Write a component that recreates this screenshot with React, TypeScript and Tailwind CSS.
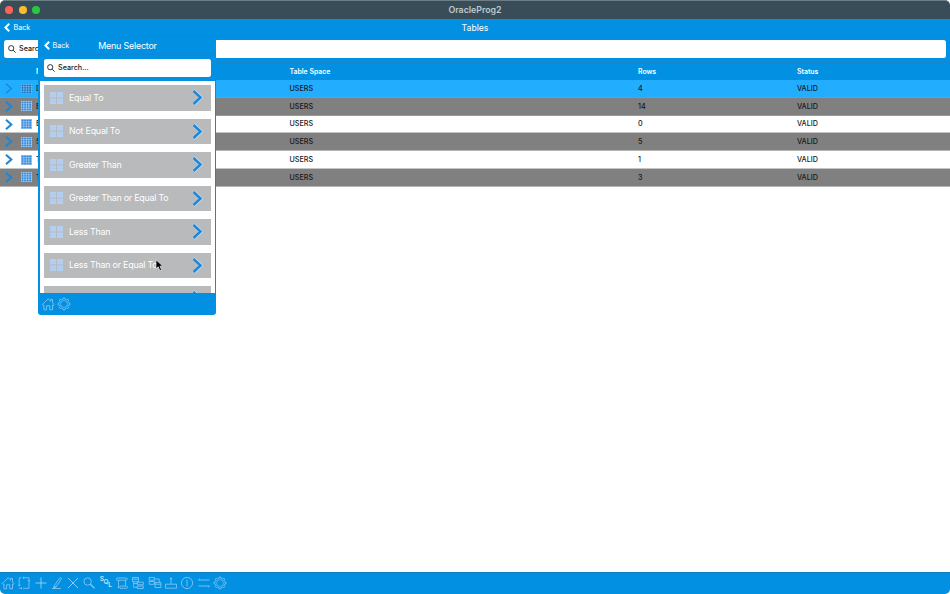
import React from "react";

type Row = { name: string; rows: string; bg: string };

const rows: Row[] = [
  { name: "D", rows: "4", bg: "bg-[#22adff] border-[#4aa9e4]" },
  { name: "E", rows: "14", bg: "bg-[#808080] border-[#9a9a9a]" },
  { name: "E", rows: "0", bg: "bg-white border-[#c4c4c4]" },
  { name: "S", rows: "5", bg: "bg-[#808080] border-[#b4b4b4]" },
  { name: "T", rows: "1", bg: "bg-white border-[#c4c4c4]" },
  { name: "T", rows: "3", bg: "bg-[#808080] border-[#b4b4b4]" },
];

const options = [
  "Equal To",
  "Not Equal To",
  "Greater Than",
  "Greater Than or Equal To",
  "Less Than",
  "Less Than or Equal To",
  "",
];

function BackChevron() {
  return (
    <svg className="h-[9px] w-[6px] shrink-0" viewBox="0 0 6 9" fill="none" stroke="white" strokeWidth="2">
      <path d="M5.2.7 1.4 4.5l3.8 3.8" />
    </svg>
  );
}

function SearchField({ className }: { className: string }) {
  return (
    <div className={"flex items-center rounded-[2.5px] bg-white text-[7.2px] font-medium text-[#202020] " + className}>
      <svg className="mr-[3px] h-[8px] w-[8px] shrink-0" viewBox="0 0 8 8" fill="none" stroke="#222" strokeWidth="0.9">
        <circle cx="3.2" cy="3.2" r="2.6" />
        <path d="m5.1 5.1 2.5 2.5" />
      </svg>
      <span className="pt-[1.5px]">Search...</span>
    </div>
  );
}

function RowChevron({ dim }: { dim: boolean }) {
  return (
    <svg className="ml-[5px] h-[11px] w-[8px] shrink-0" viewBox="0 0 8 11" fill="none">
      <path d="M1 .8 6.3 5.5 1 10.2" stroke={dim ? "#1688d8" : "#1e86d4"} strokeWidth={dim ? 1.3 : 2.1} />
    </svg>
  );
}

function TableGlyph({ color, line }: { color: string; line: string }) {
  return (
    <svg className="ml-[8px] h-[10px] w-[11px] shrink-0" viewBox="0 0 11 10">
      <rect width="11" height="10" fill={color} />
      <path
        d="M.3 0v10M2.8 0v10M5.3 0v10M7.8 0v10M10.5 0v10M0 .3h11M0 2.7h11M0 5h11M0 7.3h11M0 9.7h11"
        stroke={line}
        strokeWidth="0.75"
      />
    </svg>
  );
}

function Tiles() {
  return (
    <svg className="h-[12px] w-[13px] shrink-0" viewBox="0 0 13 12">
      <g fill="#b4cff0">
        <rect width="6" height="5.5" rx=".3" />
        <rect x="7" width="6" height="5.5" rx=".3" />
        <rect y="6.5" width="6" height="5.5" rx=".3" />
        <rect x="7" y="6.5" width="6" height="5.5" rx=".3" />
      </g>
      <path d="M0 2.8h13M0 9.2h13" stroke="#a3c1e7" strokeWidth=".35" />
    </svg>
  );
}

function Glyph({ children }: { children: React.ReactNode }) {
  return (
    <svg className="h-[14px] w-[14px] shrink-0" viewBox="0 0 14 14" fill="none" stroke="#8fcaf3" strokeWidth="0.8" strokeLinejoin="round">
      {children}
    </svg>
  );
}

function Home() {
  return (
    <Glyph>
      <path d="M1.2 7.6 7.2 1.8l2.5 2.4V2.4h1.8v3.5l1.7 1.7-1 .9-.7-.6v4.9H8.8V8.8H5.6v4H2.9V7.9l-.8.6z" />
    </Glyph>
  );
}

function Gear() {
  return (
    <Glyph>
      <path d="M5.9 2.5 6.3 1h1.4l.4 1.5 1.3.5 1.3-.8 1 1-.8 1.3.6 1.4 1.5.4v1.4l-1.5.4-.6 1.3.8 1.3-1 1-1.3-.8-1.3.6L7.7 13H6.3l-.4-1.5-1.3-.6-1.3.8-1-1 .8-1.3-.6-1.3L1 7.7V6.3l1.5-.4.6-1.4-.8-1.3 1-1 1.3.8z" />
      <circle cx="7" cy="7" r="3.4" strokeWidth=".5" />
    </Glyph>
  );
}

function Toolbar() {
  return (
    <footer className="flex h-[22px] shrink-0 items-center gap-[2.3px] rounded-b-[5px] border-t border-[#147dbd] bg-[#0290e2] pb-px pl-[1px]">
      <Home />
      <Glyph>
        <path d="M4.5 1.8H2.2v8.4M1 9.2h2.4M6.5 1.8H12V4M6 12.3h6V4.5M2.2 12.3h2M10.7 4.8h2.6M6.5.8v2M4.5 11.2v2" />
      </Glyph>
      <Glyph>
        <path d="M7 1.5v11M1.5 7h11" strokeWidth="1" />
      </Glyph>
      <Glyph>
        <path d="M2 12.5h9M4 10.2l6-8.7 1.6 1L6 11.2l-2.6 1zM4 10.2l2 1" />
      </Glyph>
      <Glyph>
        <path d="m2 2 10 10M12 2 2 12" strokeWidth="1" />
      </Glyph>
      <Glyph>
        <circle cx="5.6" cy="5.5" r="3.7" />
        <path d="m8.3 8.2 4.3 4.2" strokeWidth="1.2" />
      </Glyph>
      <div className="flex h-[14px] w-[14px] shrink-0 pl-[1px] text-[6.6px] leading-[7px] font-semibold text-[#c2e3fa]">
        <span>S</span>
        <span className="-ml-[0.5px] pt-[3px]">Q</span>
        <span className="-ml-[0.5px] pt-[6px]">L</span>
      </div>
      <Glyph>
        <path d="M3.5 4.3H2.2c-1.2 0-1-2.3.3-2.3H11c1.5 0 1.5 2.2 0 2.2H3.5v7.5h-1m8-7.5v5.5M5 12.3h6.5c1.3 0 1.3-2.2 0-2.2H5.5c-1.2 0-1.2 2.2 0 2.2" />
      </Glyph>
      <Glyph>
        <path d="M1.5 1.5h6v4.2h-6zM1.5 3.2h6M2.7 5.7v5.6h3.6M2.7 7.5h3.6M6.3 6.2h6v2.6h-6zM6.3 10h6v2.5h-6z" />
      </Glyph>
      <Glyph>
        <path d="M1.2 1.5h5.2v2.8H1.2zM1.2 5.5h5.2v2.8H1.2zM6.4 3h4.8v3.3M6.4 7h1M7 6.3h5.8v5.2H7zM7 8.2h5.8" />
      </Glyph>
      <Glyph>
        <path d="M1.5 8.2h11v4h-11zM7 8V2.5" />
        <circle cx="7" cy="2.5" r=".6" fill="#8fcaf3" />
      </Glyph>
      <Glyph>
        <circle cx="7" cy="7" r="5.6" />
        <path d="M7 3.6v6.8" />
      </Glyph>
      <Glyph>
        <path d="M1.5 4h11M3 2.9 1.5 4M1.5 10h11M11 11.1l1.5-1.1" />
      </Glyph>
      <Gear />
    </footer>
  );
}

function Option({ label }: { label: string }) {
  return (
    <div className="flex h-[25.5px] shrink-0 items-center bg-[#b8babc] pr-[8px] pl-[6px]">
      <Tiles />
      <span className="ml-[6px] text-[8.9px] leading-[12px] tracking-[-0.22px] whitespace-nowrap text-white">{label}</span>
      <svg className="ml-auto h-[17px] w-[11px] shrink-0" viewBox="0 0 11 17" fill="none">
        <path d="M1.5 1.7 8.8 8.5l-7.3 6.8" stroke="#bdd9ef" strokeWidth="3.8" />
        <path d="M1.5 2 8.5 8.5l-7 6.5" stroke="#1e86d4" strokeWidth="2.4" />
      </svg>
    </div>
  );
}

function MenuSelector() {
  return (
    <section className="absolute top-[36px] left-[38px] flex h-[279px] w-[178px] flex-col overflow-hidden rounded-b-[3px] bg-[#0290e2]">
      <header className="grid h-[19px] shrink-0 grid-cols-[50px_1fr_50px] items-center border-b border-[#0b89d6] pt-[2px] pl-px text-white">
        <div className="flex items-center gap-[3px] pl-[4.5px] text-[7.2px]">
          <BackChevron />
          <span className="pt-px">Back</span>
        </div>
        <h2 className="text-center text-[8.9px] tracking-[-0.18px] whitespace-nowrap">Menu Selector</h2>
      </header>
      <SearchField className="mt-[4px] mr-[5px] ml-[6px] h-[18px] shrink-0 pl-[3px]" />
      <div className="mt-[4px] mr-px ml-[2px] flex min-h-0 flex-1 flex-col gap-[8px] overflow-hidden bg-white px-[4px] pt-[4px]">
        {options.map((label, i) => (
          <Option key={i} label={label} />
        ))}
      </div>
      <footer className="flex h-[22px] shrink-0 items-center gap-[2px] pl-[3px]">
        <Home />
        <Gear />
      </footer>
    </section>
  );
}

export default function App() {
  return (
    <div className="relative flex h-[594px] w-[950px] flex-col overflow-hidden bg-white font-['Inter','Liberation_Sans',sans-serif]">
      <header className="flex h-[19px] shrink-0 items-center rounded-t-[5px] border-t border-[#6c7d87] bg-[#394d59] pl-[5px]">
        <div className="flex gap-[5.5px]">
          <i className="h-[8px] w-[8px] rounded-full bg-[#ff6159]" />
          <i className="h-[8px] w-[8px] rounded-full bg-[#fdbc2e]" />
          <i className="h-[8px] w-[8px] rounded-full bg-[#28c840]" />
        </div>
        <h1 className="ml-[405px] w-[60px] text-center text-[8.8px] font-semibold whitespace-nowrap text-[#bdc9d0]">OracleProg2</h1>
      </header>
      <nav className="grid h-[17px] shrink-0 grid-cols-[60px_1fr_60px] items-center border-b border-[#0b89d6] bg-[#0290e2] text-white">
        <div className="flex items-center gap-[3.5px] pt-px pl-[4px] text-[7.2px]">
          <BackChevron />
          <span className="pt-px">Back</span>
        </div>
        <h2 className="pt-px text-center text-[8.7px] leading-[14px]">Tables</h2>
      </nav>
      <div className="h-[27px] shrink-0 border-b border-[#1587cc] bg-[#0290e2] px-[4px] pt-[4px]">
        <SearchField className="h-[18px] pl-[4px]" />
      </div>
      <div className="grid h-[17px] shrink-0 grid-cols-[36px_253.5px_348.5px_159px_1fr] items-center bg-[#0290e2] pt-px text-[6.9px] font-semibold text-white">
        <span />
        <span>N</span>
        <span>Table Space</span>
        <span>Rows</span>
        <span>Status</span>
      </div>
      <main className="min-h-0 flex-1">
        {rows.map((r, i) => (
          <div
            key={i}
            className={"grid h-[17.75px] grid-cols-[36px_253.5px_348.5px_159px_1fr] items-center border-b text-[7.2px] leading-[10px] font-medium text-[#181818] " + r.bg}
          >
            <div className="flex items-center pt-[0.5px]">
              <RowChevron dim={i === 0} />
              <TableGlyph color={i === 0 ? "#1769b5" : "#2080dc"} line={i === 0 ? "#6fbcf0" : "#a9cdf0"} />
            </div>
            <span className="pt-px">{r.name}</span>
            <span className="pt-px">USERS</span>
            <span className="pt-px">{r.rows}</span>
            <span className="pt-px">VALID</span>
          </div>
        ))}
      </main>
      <Toolbar />
      <MenuSelector />
      <svg className="absolute top-[259px] left-[154.5px] h-[13px] w-[9px]" viewBox="0 0 9 13">
        <path d="M1 .8v9l2.2-2 1.6 3.8 1.8-.8L5 7.2h3z" fill="#000" stroke="#eee" strokeWidth=".7" />
      </svg>
    </div>
  );
}
